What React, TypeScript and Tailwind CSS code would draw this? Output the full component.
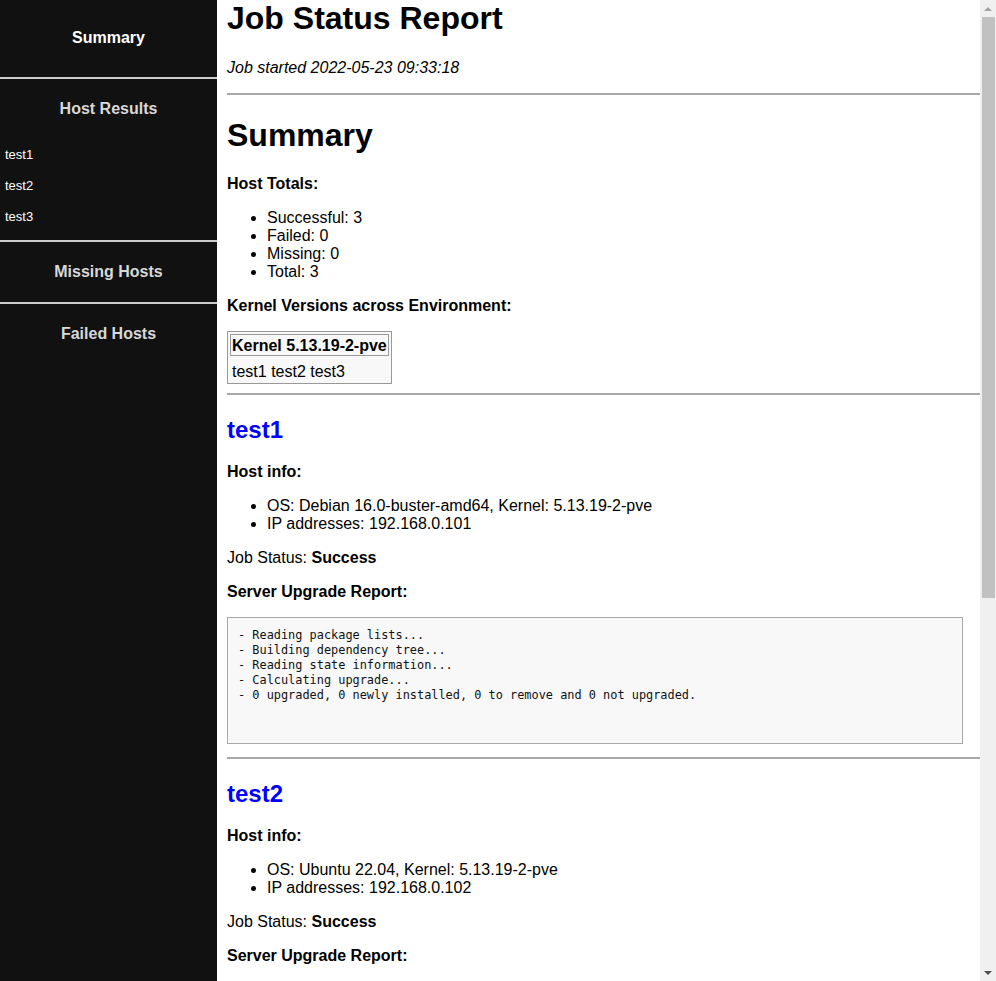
import React from 'react';

interface Host {
  name: string;
  os: string;
  ip: string;
  status: string;
}

const hosts: Host[] = [
  { name: 'test1', os: 'Debian 16.0-buster-amd64', ip: '192.168.0.101', status: 'Success' },
  { name: 'test2', os: 'Ubuntu 22.04', ip: '192.168.0.102', status: 'Success' },
  { name: 'test3', os: 'Ubuntu 20.04', ip: '192.168.0.103', status: 'Success' },
];

const upgradeLog = [
  '- Reading package lists...',
  '- Building dependency tree...',
  '- Reading state information...',
  '- Calculating upgrade...',
  '- 0 upgraded, 0 newly installed, 0 to remove and 0 not upgraded.',
];

const Rule = ({ className = '' }: { className?: string }) => (
  <hr className={`border-0 border-t-2 border-[#a8a8a8] ${className}`} />
);

const HostSection = ({ host }: { host: Host }) => (
  <section>
    <h2 className="text-[24px] leading-[28px] pt-px font-bold text-[#0000ff] mb-[18px]">{host.name}</h2>
    <p className="font-bold leading-[18px] pt-px mb-[15px]">Host info:</p>
    <ul className="list-disc pl-10 leading-[18px] pt-px mb-[15px]">
      <li>OS: {host.os}, Kernel: 5.13.19-2-pve</li>
      <li>IP addresses: {host.ip}</li>
    </ul>
    <p className="leading-[18px] pt-px mb-[15px]">
      Job Status: <b>{host.status}</b>
    </p>
    <p className="font-bold leading-[18px] pt-px mb-[16px]">Server Upgrade Report:</p>
    <pre className="w-[736px] h-[127px] border border-[#a8a8a8] bg-[#f8f8f8] px-[10px] pt-[10px] text-[11.9px] leading-[15px] font-['DejaVu_Sans_Mono',monospace] text-[#111] mb-[13px]">
      {upgradeLog.join('\n')}
    </pre>
    <Rule className="mb-[20px]" />
  </section>
);

const SideHeading = ({ label, active = false }: { label: string; active?: boolean }) => (
  <div
    className={`flex items-center justify-center font-bold text-base leading-[18px] ${
      active ? 'text-white' : 'text-[#d8d8d8]'
    }`}
  >
    {label}
  </div>
);

export default function App() {
  return (
    <div className="flex h-[981px] overflow-hidden bg-white font-['Liberation_Sans',Arial,sans-serif] text-black">
      {/* Sidebar */}
      <nav className="w-[217px] shrink-0 bg-[#111111]">
        <div className="h-[79px] pb-px flex items-center justify-center border-b-2 border-[#cccccc]">
          <SideHeading label="Summary" active />
        </div>
        <div className="border-b-2 border-[#cccccc] pt-[21px] pb-[8px]">
          <div className="mb-[21px]">
            <SideHeading label="Host Results" />
          </div>
          {hosts.map((h) => (
            <div key={h.name} className="h-[31px] flex items-center pl-[5px] text-[13px] text-white">
              {h.name}
            </div>
          ))}
        </div>
        <div className="h-[62px] pb-px flex items-center justify-center border-b-2 border-[#cccccc]">
          <SideHeading label="Missing Hosts" />
        </div>
        <div className="h-[60px] flex items-center justify-center">
          <SideHeading label="Failed Hosts" />
        </div>
      </nav>

      {/* Report */}
      <main className="flex-1 min-w-0 pl-[10px] overflow-hidden text-base">
        <h1 className="text-[32px] leading-[37px] font-bold mb-[21px]">Job Status Report</h1>
        <p className="italic leading-[18px] pt-px mb-[16px]">Job started 2022-05-23 09:33:18</p>
        <Rule className="mb-[21px]" />

        <h1 className="text-[32px] leading-[37px] pt-px font-bold mb-[20px]">Summary</h1>
        <p className="font-bold leading-[18px] pt-px mb-[15px]">Host Totals:</p>
        <ul className="list-disc pl-10 leading-[18px] pt-px mb-[15px]">
          <li>Successful: 3</li>
          <li>Failed: 0</li>
          <li>Missing: 0</li>
          <li>Total: 3</li>
        </ul>
        <p className="font-bold leading-[18px] pt-px mb-[16px]">Kernel Versions across Environment:</p>
        <table className="border border-[#999999] border-separate border-spacing-[2px] bg-[#f8f8f8] mb-[9px]">
          <thead>
            <tr>
              <th className="border border-[#999999] px-[1px] pt-[2px] pb-0 text-left font-bold leading-[18px]">
                Kernel 5.13.19-2-pve
              </th>
            </tr>
          </thead>
          <tbody>
            <tr>
              <td className="px-[2px] pt-[4px] pb-0 leading-[19px]">test1 test2 test3</td>
            </tr>
          </tbody>
        </table>
        <Rule className="mb-[20px]" />

        {hosts.map((h) => (
          <HostSection key={h.name} host={h} />
        ))}
      </main>

      {/* Scrollbar */}
      <div className="w-[16px] shrink-0 bg-[#f0f0f0] flex flex-col">
        <div className="h-[17px] flex items-center justify-center">
          <div className="w-0 h-0 border-x-[4px] border-x-transparent border-b-[4px] border-b-[#a3a3a3]" />
        </div>
        <div className="h-[581px] ml-[2px] mr-[1px] bg-[#c1c1c1]" />
        <div className="flex-1" />
        <div className="h-[17px] flex items-center justify-center">
          <div className="w-0 h-0 border-x-[4px] border-x-transparent border-t-[4px] border-t-[#505050]" />
        </div>
      </div>
    </div>
  );
}
